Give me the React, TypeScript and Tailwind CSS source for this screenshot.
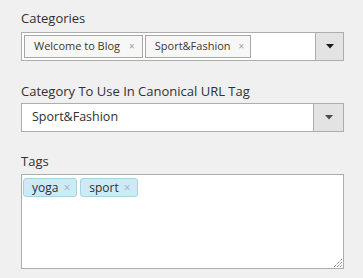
import React from "react";

const Caret = ({ color }: { color: string }) => (
  <svg width="8" height="5" viewBox="0 0 8 5">
    <polygon points="0,0 8,0 4,4.5" fill={color} />
  </svg>
);

export default function App() {
  return (
    <div
      className="w-[363px] h-[278px] bg-[#f0f0f0] pl-[21px] pr-[19px] pt-[9px] text-[#303030]"
      style={{ fontFamily: '"Open Sans", sans-serif' }}
    >
      <div className="text-[13px] leading-[19px] h-[23px]">Categories</div>
      <div className="flex h-[29px] border border-[#adadad] bg-white">
        <div className="flex-1 flex items-center gap-[2px] pl-[2px]">
          <div className="flex items-center h-[23px] border border-[#aaa6a0] bg-[#f7f7f7] pl-[9px] pr-[7px] text-[11px] text-[#41362f]">
            <span>Welcome to Blog</span>
            <span className="ml-[9px] text-[10px] text-[#a0a0a0]">×</span>
          </div>
          <div className="flex items-center h-[23px] border border-[#aaa6a0] bg-[#f7f7f7] pl-[9px] pr-[6px] text-[11px] text-[#41362f]">
            <span>Sport&amp;Fashion</span>
            <span className="ml-[8px] text-[10px] text-[#a0a0a0]">×</span>
          </div>
        </div>
        <div className="w-[28px] border-l border-[#adadad] bg-[#e3e3e3] flex items-center justify-center">
          <Caret color="#1a1a1a" />
        </div>
      </div>

      <div className="mt-[21px] text-[13px] leading-[19px] h-[21px]">
        Category To Use In Canonical URL Tag
      </div>
      <div className="flex h-[29px] border border-[#adadad] bg-white">
        <div className="flex-1 flex items-center pl-[10px] text-[12.5px]">Sport&amp;Fashion</div>
        <div className="w-[30px] border-l border-[#adadad] bg-[#e3e3e3] flex items-center justify-center">
          <Caret color="#514943" />
        </div>
      </div>

      <div className="mt-[20px] text-[13px] leading-[19px] h-[22px]">Tags</div>
      <div className="relative h-[95px] border border-[#adadad] bg-white pl-[1px] pt-[3px]">
        <div className="flex gap-[3px]">
          <div className="flex items-center h-[19px] rounded-[3px] border border-[#a6d3e4] bg-[#cdeaf5] pl-[8px] pr-[6px] text-[12px] text-[#303030]">
            <span>yoga</span>
            <span className="ml-[5px] text-[12px] text-[#9fb3c4]">×</span>
          </div>
          <div className="flex items-center h-[19px] rounded-[3px] border border-[#a6d3e4] bg-[#cdeaf5] pl-[8px] pr-[6px] text-[12px] text-[#303030]">
            <span>sport</span>
            <span className="ml-[5px] text-[12px] text-[#9fb3c4]">×</span>
          </div>
        </div>
        <svg className="absolute right-[1px] bottom-[1px]" width="9" height="9" viewBox="0 0 9 9">
          <line x1="1" y1="9" x2="9" y2="1" stroke="#555" strokeWidth="1" strokeDasharray="1 1" />
          <line x1="4" y1="9" x2="9" y2="4" stroke="#555" strokeWidth="1" strokeDasharray="1 1" />
          <line x1="7" y1="9" x2="9" y2="7" stroke="#555" strokeWidth="1" strokeDasharray="1 1" />
        </svg>
      </div>
    </div>
  );
}
